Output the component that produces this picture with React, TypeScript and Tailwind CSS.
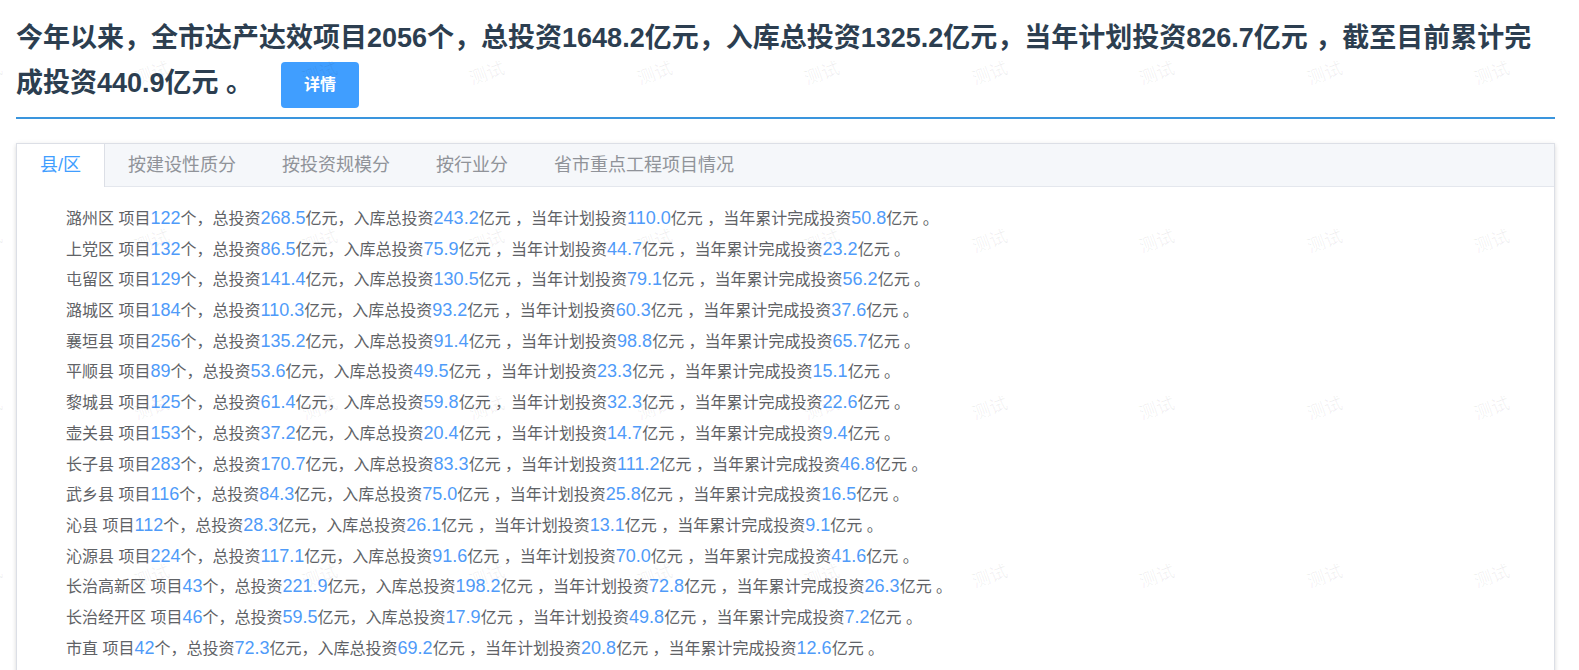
const rows: [string, number, string, string, string, string][] = [
  ['潞州区', 122, '268.5', '243.2', '110.0', '50.8'],
  ['上党区', 132, '86.5', '75.9', '44.7', '23.2'],
  ['屯留区', 129, '141.4', '130.5', '79.1', '56.2'],
  ['潞城区', 184, '110.3', '93.2', '60.3', '37.6'],
  ['襄垣县', 256, '135.2', '91.4', '98.8', '65.7'],
  ['平顺县', 89, '53.6', '49.5', '23.3', '15.1'],
  ['黎城县', 125, '61.4', '59.8', '32.3', '22.6'],
  ['壶关县', 153, '37.2', '20.4', '14.7', '9.4'],
  ['长子县', 283, '170.7', '83.3', '111.2', '46.8'],
  ['武乡县', 116, '84.3', '75.0', '25.8', '16.5'],
  ['沁县', 112, '28.3', '26.1', '13.1', '9.1'],
  ['沁源县', 224, '117.1', '91.6', '70.0', '41.6'],
  ['长治高新区', 43, '221.9', '198.2', '72.8', '26.3'],
  ['长治经开区', 46, '59.5', '17.9', '49.8', '7.2'],
  ['市直', 42, '72.3', '69.2', '20.8', '12.6'],
];

const tabs = ['县/区', '按建设性质分', '按投资规模分', '按行业分', '省市重点工程项目情况'];

function Num({ children }: { children: React.ReactNode }) {
  return <span className="text-[18px] leading-none text-[#4f9bf9]">{children}</span>;
}

function Watermark() {
  const marks: { x: number; y: number }[] = [];
  for (let r = 0; r < 5; r++) {
    for (let c = 0; c < 11; c++) {
      marks.push({ x: -15.5 + c * 167.5, y: 74 + r * 167.5 });
    }
  }
  return (
    <div className="pointer-events-none absolute inset-0 overflow-hidden">
      {marks.map((m, i) => (
        <span
          key={i}
          className="absolute -translate-x-1/2 -translate-y-1/2 -rotate-[20deg] whitespace-nowrap text-[18px] text-black/[0.06]"
          style={{ left: m.x, top: m.y }}
        >
          测试
        </span>
      ))}
    </div>
  );
}

export default function App() {
  return (
    <div
      className="relative min-h-[670px] bg-white"
      style={{ fontFamily: '"Liberation Sans", "Noto Sans CJK SC", sans-serif' }}
    >
      <div className="ml-4 mr-6">
        <p className="pt-4 text-[27px] font-bold leading-[45px] text-[#2c3e50]">
          今年以来，全市达产达效项目2056个，总投资1648.2亿元，入库总投资1325.2亿元，当年计划投资826.7亿元 ，截至目前累计完成投资440.9亿元 。
          <button className="ml-7 inline-block h-[46px] w-[78px] rounded bg-[#409eff] align-middle text-base font-semibold leading-[46px] text-white">
            详情
          </button>
        </p>
        <div className="mt-[9px] h-[2px] bg-[#3a95dd]" />

        <div className="mt-6 border border-[#dcdfe6] bg-white shadow-[0_2px_4px_0_rgba(0,0,0,0.12),0_0_6px_0_rgba(0,0,0,0.04)]">
          <div className="flex h-[43px] border-b border-[#e4e7ed] bg-[#f5f7fa]">
            {tabs.map((t, i) => (
              <div
                key={t}
                className={`px-[23px] text-[18px] leading-[42px] ${
                  i === 0
                    ? 'relative z-10 h-[43px] border-r border-[#dcdfe6] bg-white text-[#409eff]'
                    : 'text-[#909399]'
                }`}
              >
                {t}
              </div>
            ))}
          </div>
          <div className="pb-6 pl-[49px] pt-[17px] text-base text-[#606266]">
            {rows.map(([name, n, a, b, c, d]) => (
              <div key={name} className="leading-[30.7px]">
                {name} 项目<Num>{n}</Num>个，总投资<Num>{a}</Num>亿元，入库总投资<Num>{b}</Num>亿元 ，当年计划投资
                <Num>{c}</Num>亿元 ，当年累计完成投资<Num>{d}</Num>亿元 。
              </div>
            ))}
          </div>
        </div>
      </div>
      <Watermark />
    </div>
  );
}
